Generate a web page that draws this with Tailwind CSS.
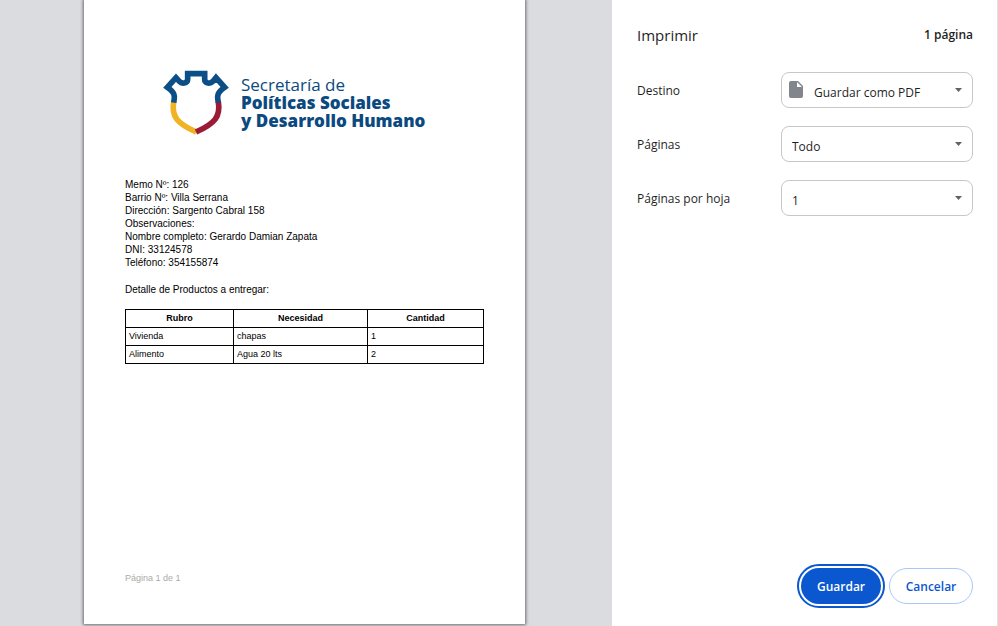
<!DOCTYPE html>
<html lang="es">
<head>
<meta charset="utf-8">
<meta name="viewport" content="width=device-width, initial-scale=1">
<title>Imprimir</title>
<script src="https://cdn.jsdelivr.net/npm/@tailwindcss/browser@4"></script>
</head>
<body class="flex h-screen overflow-hidden bg-white font-['Open_Sans','Noto_Sans',sans-serif] text-[12px] text-[#1f1f1f]">
  <main class="flex flex-1 justify-center bg-[#dadce0] pb-0.5 pr-[3px]">
    <article class="flex w-[441px] flex-col bg-white px-[41px] pt-[69px] pb-10 font-['Liberation_Sans',Arial,sans-serif] text-black shadow-[0_0_3px_1px_rgba(0,0,0,0.5)]">
      <header class="flex gap-3 pl-[38px] text-[#0b4a80]">
        <svg class="h-[67px] w-[66px] shrink-0" viewBox="24 24 198 201" fill="none" stroke-width="17" aria-hidden="true">
          <path stroke="#f0b323" d="M56 122C49 166 65 187 124 213"/>
          <path stroke="#9b1b37" d="M190 122C197 166 181 187 123 213"/>
          <path stroke="#0b4f86" d="M56 125C57 117 60 110 57 101C54 91 45 85 37 79L63 50L73 61C80 69 98 68 98 55V38H149V55C149 68 166 69 174 61L183 50L209 79C201 85 192 91 189 101C186 110 189 117 190 125"/>
        </svg>
        <p class="whitespace-nowrap pt-[7px] font-['Open_Sans',sans-serif] text-[17px] leading-[18px]">Secretaría de<br><strong class="font-extrabold">Políticas Sociales<br>y Desarrollo Humano</strong></p>
      </header>
      <section class="mt-[42px] text-[10px] leading-[13px]">
        <p>Memo Nº: 126</p>
        <p>Barrio Nº: Villa Serrana</p>
        <p>Dirección: Sargento Cabral 158</p>
        <p>Observaciones:</p>
        <p>Nombre completo: Gerardo Damian Zapata</p>
        <p>DNI: 33124578</p>
        <p>Teléfono: 354155874</p>
        <p class="mt-[14px]">Detalle de Productos a entregar:</p>
      </section>
      <table class="mt-[13px] w-full table-fixed border-collapse text-left text-[9px] leading-[17px]">
        <colgroup><col class="w-[108px]"><col class="w-[134px]"><col></colgroup>
        <thead><tr class="text-center">
          <th class="border border-black">Rubro</th><th class="border border-black">Necesidad</th><th class="border border-black">Cantidad</th>
        </tr></thead>
        <tbody>
          <tr><td class="border border-black px-[3px]">Vivienda</td><td class="border border-black px-[3px]">chapas</td><td class="border border-black px-[3px]">1</td></tr>
          <tr><td class="border border-black px-[3px]">Alimento</td><td class="border border-black px-[3px]">Agua 20 lts</td><td class="border border-black px-[3px]">2</td></tr>
        </tbody>
      </table>
      <footer class="mt-auto text-[9px] leading-3 text-[#aaa]">Página 1 de 1</footer>
    </article>
  </main>
  <aside class="flex w-[386px] shrink-0 flex-col border-r border-[#dfe1e5] pl-[25px] pr-6">
    <header class="flex h-[70px] items-center justify-between">
      <h1 class="text-[15px]">Imprimir</h1>
      <span class="font-semibold">1 página</span>
    </header>
    <form id="print" class="flex flex-col gap-[18px] pt-0.5">
      <div class="flex items-center justify-between">
        <label for="destino" class="pt-0.5">Destino</label>
        <div class="relative w-48">
          <select id="destino" class="h-9 w-full appearance-none rounded-lg border border-[#c7c7c7] bg-white pt-1.5 pl-8"><option>Guardar como PDF</option></select>
          <svg class="pointer-events-none absolute top-2 left-2 h-[18px] w-[14px]" viewBox="0 0 14 18" aria-hidden="true"><path fill="#80868b" d="M2 1H9L14 6V16Q14 18 12 18H2Q0 18 0 16V3Q0 1 2 1Z"/><path fill="#fff" d="M8 2V7H13Z"/></svg>
          <svg class="pointer-events-none absolute top-4 right-[11px] h-1 w-[7px]" viewBox="0 0 7 4" aria-hidden="true"><path fill="#5f6368" d="M0 0H7L3.5 4Z"/></svg>
        </div>
      </div>
      <div class="flex items-center justify-between">
        <label for="paginas" class="pt-0.5">Páginas</label>
        <div class="relative w-48">
          <select id="paginas" class="h-9 w-full appearance-none rounded-lg border border-[#c7c7c7] bg-white pt-1.5 pl-2.5"><option>Todo</option></select>
          <svg class="pointer-events-none absolute top-4 right-[11px] h-1 w-[7px]" viewBox="0 0 7 4" aria-hidden="true"><path fill="#5f6368" d="M0 0H7L3.5 4Z"/></svg>
        </div>
      </div>
      <div class="flex items-center justify-between">
        <label for="hoja" class="pt-0.5">Páginas por hoja</label>
        <div class="relative w-48">
          <select id="hoja" class="h-9 w-full appearance-none rounded-lg border border-[#c7c7c7] bg-white pt-1.5 pl-2.5"><option>1</option></select>
          <svg class="pointer-events-none absolute top-4 right-[11px] h-1 w-[7px]" viewBox="0 0 7 4" aria-hidden="true"><path fill="#5f6368" d="M0 0H7L3.5 4Z"/></svg>
        </div>
      </div>
    </form>
    <footer class="mt-auto flex justify-end gap-2 pb-[22px] font-semibold">
      <button type="submit" form="print" class="h-9 w-20 rounded-full bg-[#0b57d0] pt-0.5 text-white outline-2 outline-offset-2 outline-[#0b57d0]">Guardar</button>
      <button type="button" class="h-9 w-[84px] rounded-full border border-[#a8c7fa] pt-0.5 text-[#0b57d0]">Cancelar</button>
    </footer>
  </aside>
</body>
</html>
